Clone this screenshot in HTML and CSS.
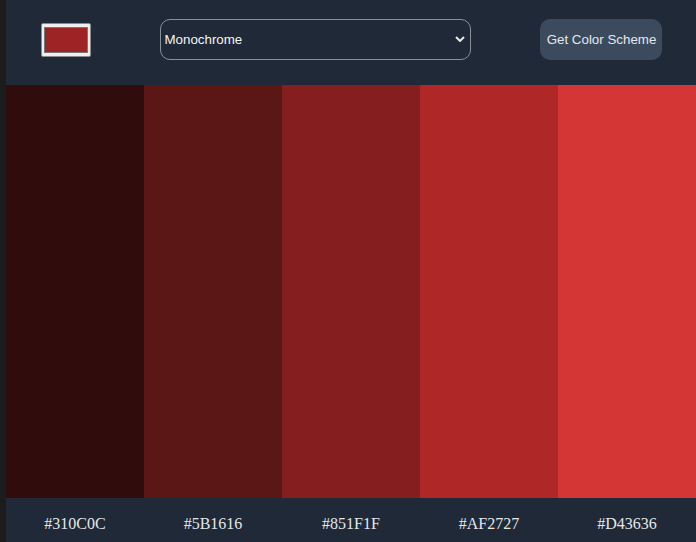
FILE: index.html
```html
<!DOCTYPE html>
<html>
<head>
<meta charset="utf-8">
<link rel="stylesheet" href="styles.css">
</head>
<body>
<div class="app">
  <header class="controls">
    <div class="color-picker"><div class="swatch"></div></div>
    <div class="select">
      <span class="select-text">Monochrome</span>
      <svg class="chevron" width="10" height="6" viewBox="0 0 10 6"><path d="M1 1 L5 5 L9 1" fill="none" stroke="#e5e7eb" stroke-width="2"/></svg>
    </div>
    <button class="btn">Get Color Scheme</button>
  </header>
  <main class="colors">
    <div class="col" style="background:#310C0C"></div>
    <div class="col" style="background:#5B1616"></div>
    <div class="col" style="background:#851F1F"></div>
    <div class="col" style="background:#AF2727"></div>
    <div class="col" style="background:#D43636"></div>
  </main>
  <footer class="labels">
    <div class="label">#310C0C</div>
    <div class="label">#5B1616</div>
    <div class="label">#851F1F</div>
    <div class="label">#AF2727</div>
    <div class="label">#D43636</div>
  </footer>
</div>
</body>
</html>
```
FILE: styles.css
```css
html, body {
  margin: 0;
  padding: 0;
  height: 100%;
}
body {
  background: #1c1c1c;
  display: flex;
}
.app {
  margin-left: 6px;
  flex: 1;
  display: flex;
  flex-direction: column;
  height: 542px;
  background: #1f2937;
}
.controls {
  height: 85px;
  box-sizing: border-box;
  padding-bottom: 7px;
  display: flex;
  align-items: center;
  justify-content: space-around;
}
.color-picker {
  width: 50px;
  height: 34px;
  box-sizing: border-box;
  background: #efefef;
  border: 1px solid #8a8a8a;
  border-radius: 2px;
  padding: 3px 2px;
  margin-top: 2px;
}
.swatch {
  width: 100%;
  height: 100%;
  box-sizing: border-box;
  border: 1px solid #777;
  background: #9e2324;
}
.select {
  width: 311px;
  height: 41px;
  box-sizing: border-box;
  border: 1px solid #8b8f96;
  border-radius: 10px;
  display: flex;
  align-items: center;
  justify-content: space-between;
  padding: 0 5px 0 4px;
  font-family: "Liberation Sans", Arial, sans-serif;
  font-size: 13.33px;
  color: #f3f4f6;
}
.btn {
  width: 122px;
  height: 41px;
  border: none;
  border-radius: 10px;
  background: #3c4a5e;
  color: #e5e7eb;
  font-family: "Liberation Sans", Arial, sans-serif;
  font-size: 13.33px;
  padding: 0 0 0 2px;
}
.colors {
  flex: 1;
  display: flex;
}
.col {
  flex: 1;
}
.labels {
  height: 44px;
  display: flex;
  align-items: center;
  padding-top: 7px;
  box-sizing: border-box;
}
.label {
  flex: 1;
  text-align: center;
  font-family: "Liberation Serif", "Times New Roman", serif;
  font-size: 16px;
  color: #e5e7eb;
}
```
